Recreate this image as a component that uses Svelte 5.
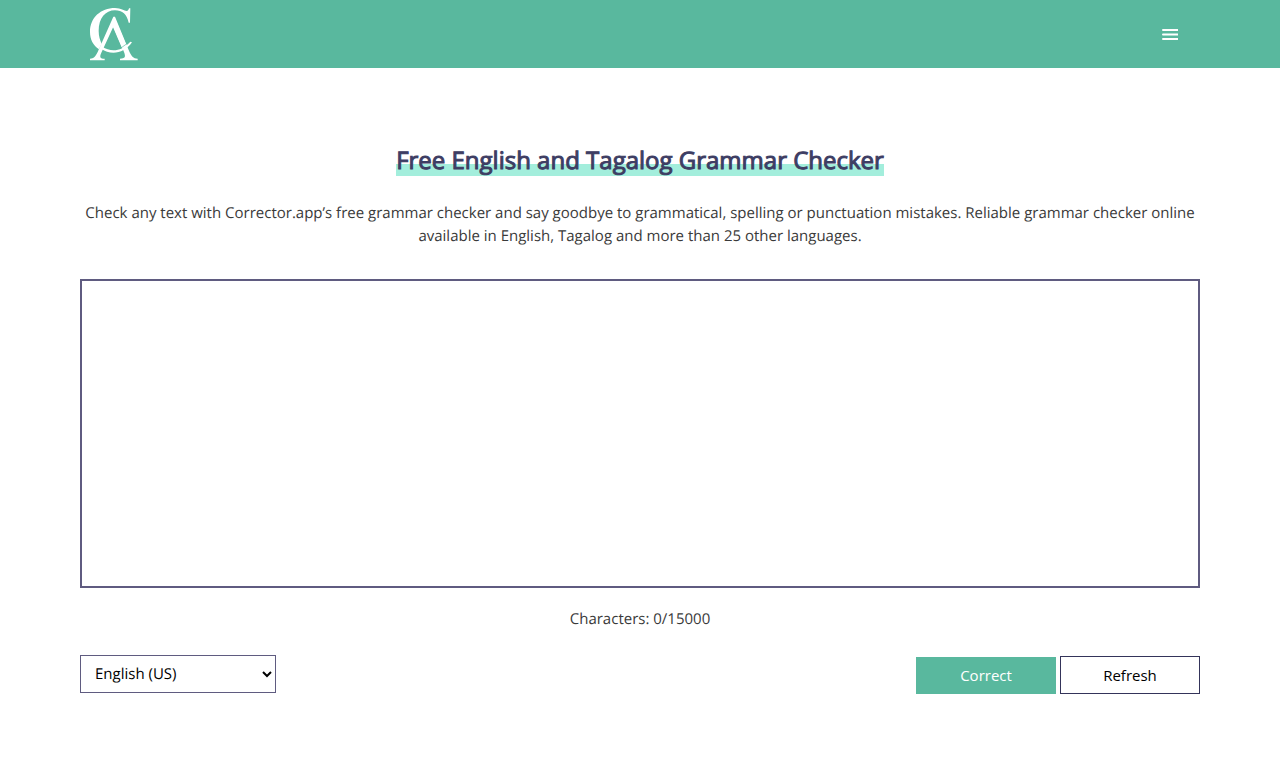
<script>
	let text = $state('')
	let language = $state('en-US')
	const maxLength = 15000
	const languages = [
		{ code: 'en-US', name: 'English (US)' },
		{ code: 'en-GB', name: 'English (GB)' },
		{ code: 'tl', name: 'Tagalog' }
	]
</script>

<header>
	<div class="nav">
		<a class="logo" href="/" aria-label="Corrector App">
			<svg viewBox="30 21 144 162" width="48" height="54" fill="#fff">
				<path
					d="M147 25h4l-1 43h-4c-5-25-19-37-41-37-29 0-49 24-49 62 0 16 4 28 9 38l-8 17C39 136 30 118 30 96c0-43 32-72 75-72 18 0 28 9 35 9 4 0 6-4 7-8z"
				/>
				<path
					d="M100 50h5l41 100c8 19 14 26 27 26v5h-53v-5c15 0 18-5 12-20l-32-76-36 78c-6 13-4 18 10 18v5H30v-5c11 0 17-7 23-20z"
				/>
				<path d="M103 50l37 88-13 8-31-72z" />
				<path d="M67 140c24 16 57 16 84-15l5 2c-23 35-66 39-92 19z" />
				<path d="M120 146l18-13" stroke="#59b89e" stroke-width="2" />
			</svg>
		</a>
		<button class="menu" type="button" aria-label="Menu">
			<svg viewBox="0 0 16 12" width="16" height="12" fill="#fff">
				<path d="M1 1h15v2H1a1 1 0 0 1 0-2zM1 5.400h15v2H1a1 1 0 0 1 0-2zM1 10h15v2H1a1 1 0 0 1 0-2z" />
			</svg>
		</button>
	</div>
</header>

<main>
	<h1><span>Free English and Tagalog Grammar Checker</span></h1>
	<p class="intro">
		Check any text with Corrector.app’s free grammar checker and say goodbye to grammatical, spelling
		or punctuation mistakes. Reliable grammar checker online available in English, Tagalog and more
		than 25 other languages.
	</p>
	<textarea aria-label="Text to check" maxlength={maxLength} bind:value={text}></textarea>
	<p class="count">Characters: {text.length}/{maxLength}</p>
	<div class="controls">
		<select aria-label="Language" bind:value={language}>
			{#each languages as lang}
				<option value={lang.code}>{lang.name}</option>
			{/each}
		</select>
		<div class="buttons">
			<button class="correct" type="button">Correct</button>
			<button class="refresh" type="button" onclick={() => (text = '')}>Refresh</button>
		</div>
	</div>
</main>

<style>
	:global(body) {
		margin: 0;
		background: #fff;
		color: #3a3a3a;
		font: 15px/23px 'Open Sans', sans-serif;
		text-rendering: geometricPrecision;
	}
	header {
		background: #59b89e;
	}
	.nav {
		display: flex;
		align-items: center;
		justify-content: space-between;
		max-width: 1120px;
		height: 68px;
		margin: 0 auto;
		padding: 0 10px;
		box-sizing: border-box;
	}
	.logo svg,
	.menu svg {
		display: block;
	}
	.menu {
		padding: 12px;
		border: 0;
		background: none;
		cursor: pointer;
	}
	main {
		max-width: 1120px;
		margin: 0 auto;
		padding: 77px 20px;
	}
	h1 {
		margin: 0;
		color: #3d3d63;
		font-size: 24px;
		line-height: 32px;
		font-weight: 400;
		text-align: center;
		-webkit-text-stroke: 1px #3d3d63;
	}
	h1 span {
		display: inline-block;
		background: linear-gradient(transparent 19px, #a3eedc 19px, #a3eedc 31px, transparent 31px);
	}
	.intro {
		margin: 25px 0 31px;
		text-align: center;
	}
	textarea {
		display: block;
		width: 100%;
		height: 309px;
		padding: 16px;
		box-sizing: border-box;
		border: 2px solid #5f5b80;
		border-radius: 0;
		font: inherit;
		resize: none;
	}
	.count {
		margin: 20px 0 24px;
		text-align: center;
	}
	.controls {
		display: flex;
		align-items: flex-start;
		justify-content: space-between;
	}
	select {
		width: 196px;
		height: 38px;
		padding: 0 0 0 10px;
		border: 1px solid #5f5b80;
		border-radius: 0;
		background: #fff;
		color: #000;
		font: inherit;
		text-rendering: inherit;
	}
	.buttons {
		display: flex;
		align-items: flex-end;
		gap: 4px;
		padding-top: 1px;
	}
	.buttons button {
		width: 140px;
		height: 38px;
		padding: 0;
		border: 1px solid #34345a;
		background: #fff;
		color: #000;
		font: inherit;
		cursor: pointer;
	}
	.buttons .correct {
		height: 37px;
		border: 0;
		background: #59b89e;
		color: #fff;
	}
</style>
